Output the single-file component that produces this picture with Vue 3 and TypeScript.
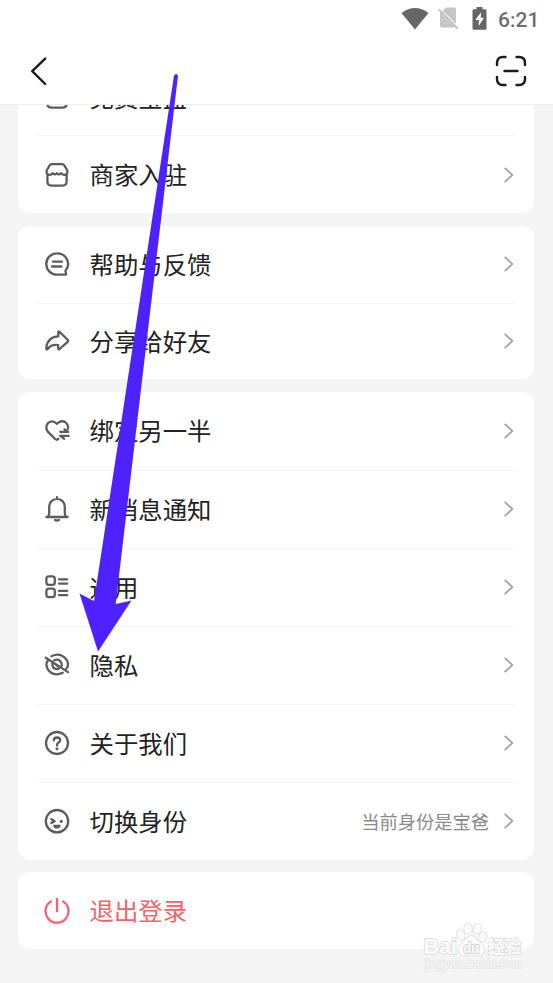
<script setup lang="ts">
interface Row {
  icon: string
  label: string
  note?: string
}

const groups: { name: string; rows: Row[] }[] = [
  {
    name: 'store',
    rows: [
      { icon: 'shop', label: '免费宝盒' },
      { icon: 'shop', label: '商家入驻' },
    ],
  },
  {
    name: 'support',
    rows: [
      { icon: 'chat', label: '帮助与反馈' },
      { icon: 'share', label: '分享给好友' },
    ],
  },
  {
    name: 'settings',
    rows: [
      { icon: 'heart', label: '绑定另一半' },
      { icon: 'bell', label: '新消息通知' },
      { icon: 'grid', label: '通用' },
      { icon: 'eye', label: '隐私' },
      { icon: 'help', label: '关于我们' },
      { icon: 'face', label: '切换身份', note: '当前身份是宝爸' },
    ],
  },
]

// Stroked outlines on a 26 x 26 grid
const outlines: Record<string, string> = {
  shop: 'M7.6 2.2H18.4Q19.6 2.2 20.3 3.3L23.4 8.8Q23.8 12.6 20.5 12.8Q18.7 12.9 17.2 11.2Q15.2 13.6 13 11.2Q10.8 13.6 8.8 11.2Q7.3 12.9 5.5 12.8Q2.2 12.6 2.6 8.8L5.7 3.3Q6.4 2.2 7.6 2.2ZM3.4 12V19.6Q3.4 23.6 7.4 23.6H18.6Q22.6 23.6 22.6 19.6V12',
  chat: 'M13 2.3A10.7 10.7 0 1 0 13 23.7H21.4Q22.6 23.6 22 22.3L21.4 20A10.7 10.7 0 0 0 13 2.3ZM9 10.6H18M8 15.5H17.4',
  share: 'M14.3 4.4Q14.2 2.8 15.5 3.8L23.6 11.7Q24.7 12.8 23.6 13.8L15.6 21Q14.2 22 14.2 20.3V17.1Q7.2 16.2 3.8 20.8Q2 22.4 2.3 19.8Q3.5 9 14.3 8.4Z',
  heart: 'M23.8 11Q25 7 21.5 4.3Q17 1.6 13 5.8Q8.6 1.6 4.5 4.6Q.4 8.6 3.8 13.6L11.4 21.2Q13 22.4 14.4 20.8M24.2 13.8H16.2M20.5 11.3L24 13.9M16 17.8H24.6M16.4 17.9L20 20.7',
  bell: 'M2.4 21H23.6M4.5 20.8L5.2 17V10.6A7.8 7.8 0 0 1 20.8 10.6V17L21.5 20.8M13 2.6V1.2M11 24Q13 25 15 24',
  grid: 'M4.8 2.4H8.4Q10.8 2.4 10.8 4.8V8.4Q10.8 10.8 8.4 10.8H4.8Q2.4 10.8 2.4 8.4V4.8Q2.4 2.4 4.8 2.4ZM4.8 14.6H8.4Q10.8 14.6 10.8 17V20.8Q10.8 23.2 8.4 23.2H4.8Q2.4 23.2 2.4 20.8V17Q2.4 14.6 4.8 14.6ZM15 5.3H23.2M15 9.6H23.2M15 16.8H23.2M15 21.2H23.2',
  eye: 'M1.8 5.7L24 20.1M7.5 4.2Q16 -.1 22 6.9Q26 12.3 22.3 16.7M4 8.2Q.7 12.3 4.2 17.9Q10.4 25 18.7 20.7M10.2 8.3Q14.8 6.3 17.2 10.5Q18.1 12.5 17.5 13.9M8.4 11.5Q8 16.7 12.8 17L14.9 16.6M11.6 12.3Q13 13.5 14.4 14.1',
  help: 'M24 13A11 11 0 1 1 2 13A11 11 0 1 1 24 13ZM9.8 10.4Q9.8 7.5 13 7.5Q16.2 7.5 16.2 10.2Q16.2 11.6 14.5 12.6Q13 13.5 13 15.5',
  face: 'M24.2 13.2A11.2 11.2 0 1 1 1.8 13.2A11.2 11.2 0 1 1 24.2 13.2ZM7.4 11.2L10.6 13.3L7.4 15.1',
}
</script>

<template>
  <div class="screen">
    <header class="header">
      <div class="status">
        <svg class="wifi" width="28" height="22" viewBox="0 0 28 22">
          <path d="M.5 5Q14-4.8 27.5 5L14 21.5Z" />
        </svg>
        <svg class="sim" width="21" height="23" viewBox="0 0 21 23">
          <path class="sim-card" d="M8 .5H16Q18 .5 18 2.5V17L4.5 3.7ZM2 5L17.5 20.5H4Q2 20.5 2 18.5Z" />
          <path class="sim-slash" d="M.8 2.4L19.8 21.7" />
        </svg>
        <svg class="battery" width="15" height="23" viewBox="0 0 15 23">
          <path d="M4.5 0H10.5V2.2H13.3Q14.5 2.2 14.5 3.4V21.5Q14.5 22.7 13.3 22.7H1.7Q.5 22.7.5 21.5V3.4Q.5 2.2 1.7 2.2H4.5Z" />
          <path class="bolt" d="M9 5.3L3.4 13H6.8V19L11.9 10.8H8.7Z" />
        </svg>
        <span class="time">6:21</span>
      </div>
      <div class="nav">
        <svg class="back" width="20" height="30" viewBox="0 0 20 30"><path d="M16.2 2.6L3.2 15.2L16.2 28" /></svg>
        <svg class="scan" width="34" height="34" viewBox="0 0 34 34">
          <path d="M3 11V9Q3 3 9 3H11.5M22.5 3H25Q31 3 31 9V11M31 23V25Q31 31 25 31H22.5M11.5 31H9Q3 31 3 25V23M10.5 17H23.5" />
        </svg>
      </div>
    </header>

    <main class="content">
      <section v-for="group in groups" :key="group.name" class="card" :class="group.name">
        <div v-for="row in group.rows" :key="row.label" class="row">
          <svg class="icon" width="26" height="26" viewBox="0 0 26 26">
            <path :d="outlines[row.icon]" />
            <circle v-if="row.icon === 'help'" class="solid" cx="13" cy="18.7" r="1.5" />
            <template v-if="row.icon === 'face'">
              <circle class="solid" cx="17.3" cy="13.3" r="1.6" />
              <path class="solid" d="M9.1 16.7H16.7Q16.4 20.6 12.9 20.6Q9.4 20.6 9.1 16.7Z" />
            </template>
          </svg>
          <span class="label">{{ row.label }}</span>
          <span v-if="row.note" class="note">{{ row.note }}</span>
          <svg class="chevron" width="10" height="16" viewBox="0 0 10 16"><path d="M1.2 1.3L8.4 8L1.2 14.7" /></svg>
        </div>
      </section>
      <section class="card logout">
        <div class="row">
          <svg class="icon" width="26" height="26" viewBox="0 0 26 26">
            <path d="M13 .9V13.2M6.9 3.4A11.5 11.5 0 1 0 19.1 3.4" />
          </svg>
          <span class="label">退出登录</span>
        </div>
      </section>
    </main>

    <svg class="pointer" width="553" height="983" viewBox="0 0 553 983">
      <path d="M174 75.5Q176.2 72.5 178 75.5L115.7 604L131.5 600.5L98 651.5L79.5 593.5L94 601Z" />
    </svg>

    <svg class="watermark" width="112" height="54" viewBox="0 0 112 54">
      <g class="paw">
        <ellipse cx="34.8" cy="17" rx="3.7" ry="5" transform="rotate(-15 34.8 17)" />
        <ellipse cx="42" cy="10.5" rx="3.8" ry="5.2" />
        <ellipse cx="51" cy="11.2" rx="3.8" ry="5.2" transform="rotate(12 51 11.2)" />
        <ellipse cx="56.7" cy="19" rx="3.7" ry="4.8" transform="rotate(25 56.7 19)" />
        <path d="M45.5 18Q48.5 18 51 22Q58.5 27.5 58.5 32Q57 38.5 51 37.3Q45 36 40 37.3Q33.5 38.5 32.7 32Q33 27.5 39.5 22Q42 18 45.5 18Z" />
      </g>
      <text class="brand" x="-2.5" y="36.3" textLength="33.5" lengthAdjust="spacingAndGlyphs">Bai</text>
      <text class="du" x="37.3" y="34.8" textLength="16" lengthAdjust="spacingAndGlyphs">du</text>
      <text class="brand-cn" x="62" y="35" textLength="33" lengthAdjust="spacingAndGlyphs">经验</text>
      <text class="site" x="-1.5" y="50" textLength="98" lengthAdjust="spacingAndGlyphs">jingyan.baidu.com</text>
    </svg>
  </div>
</template>

<style>
body {
  margin: 0;
  background: #f4f4f4;
}
</style>

<style scoped>
.screen {
  position: relative;
  display: flex;
  flex-direction: column;
  height: 983px;
  overflow: hidden;
  background: #f4f4f4;
  color: #222;
  font-family: 'Noto Sans CJK SC', sans-serif;
}
svg {
  display: block;
  flex: none;
  fill: none;
}
.header {
  flex: none;
  box-sizing: border-box;
  height: 105px;
  border-bottom: 1px solid #ececec;
  background: #fff;
}
.status {
  display: flex;
  align-items: center;
  justify-content: flex-end;
  height: 37px;
  padding-right: 12px;
}
.wifi,
.battery {
  fill: #666;
}
.wifi {
  margin-right: 9px;
}
.sim {
  margin-right: 13px;
}
.sim-card {
  fill: #c6c6c6;
}
.sim-slash {
  stroke: #bbb;
  stroke-width: 1.7;
}
.battery {
  margin-right: 11px;
}
.bolt {
  fill: #fff;
}
.time {
  width: 43px;
  padding-top: 2px;
  font: 500 21px/36px Roboto, sans-serif;
  color: #6f6f6f;
  white-space: nowrap;
}
.nav {
  display: flex;
  align-items: center;
  justify-content: space-between;
  height: 67px;
  padding: 0 25px 0 28.5px;
}
.back,
.scan {
  stroke: #1c1c1c;
  stroke-width: 2.4;
  stroke-linecap: round;
  stroke-linejoin: round;
}
.content {
  flex: 1;
  min-height: 0;
  overflow: hidden;
  padding: 0 18.6px 0 18.4px;
}
.card {
  margin-bottom: 12.5px;
  padding: 0 18.3px;
  border-radius: 12px;
  background: #fff;
}
.row {
  display: flex;
  align-items: center;
  box-sizing: border-box;
  height: 78px;
  padding: 0 2px 0 7.3px;
}
.row + .row {
  border-top: 1.5px solid #f5f5f5;
}
.store {
  margin-top: -47.6px;
}
.store .row:first-child {
  padding-top: 2px;
}
.support .row,
.logout .row {
  height: 76.7px;
}
.icon {
  stroke: #5c5c5c;
  stroke-width: 2.3;
  stroke-linecap: round;
  stroke-linejoin: round;
}
.solid {
  fill: #5c5c5c;
  stroke: none;
}
.label {
  flex: 1;
  padding: 0 0 1px 19.5px;
  font-size: 24.4px;
  line-height: 36px;
}
.note {
  padding-right: 15px;
  color: #8a8a8a;
  font-size: 18.3px;
  line-height: 28px;
}
.chevron {
  stroke: #999;
  stroke-width: 1.6;
  stroke-linecap: round;
  stroke-linejoin: round;
}
.logout {
  color: #f95f6a;
}
.logout .icon {
  stroke: #f95f6a;
}
.pointer {
  position: absolute;
  top: 0;
  left: 0;
  fill: #4d22ff;
}
.watermark {
  position: absolute;
  left: 426px;
  top: 918px;
  overflow: visible;
  fill: #fbfbfb;
  stroke: #dfdfdf;
  stroke-width: 2;
  paint-order: stroke;
  font-family: 'Liberation Sans', sans-serif;
}
.paw {
  stroke-width: 1.8;
}
.brand {
  font-size: 22.5px;
  font-weight: 700;
}
.du {
  stroke: #d4d4d4;
  font-size: 15px;
  font-weight: 700;
}
.brand-cn {
  font-family: 'Noto Sans CJK SC', sans-serif;
  font-size: 17.5px;
  font-weight: 700;
}
.site {
  font-size: 12px;
  fill: #f5f5f5;
  stroke: #e6e6e6;
  stroke-width: 1.6;
}
</style>
